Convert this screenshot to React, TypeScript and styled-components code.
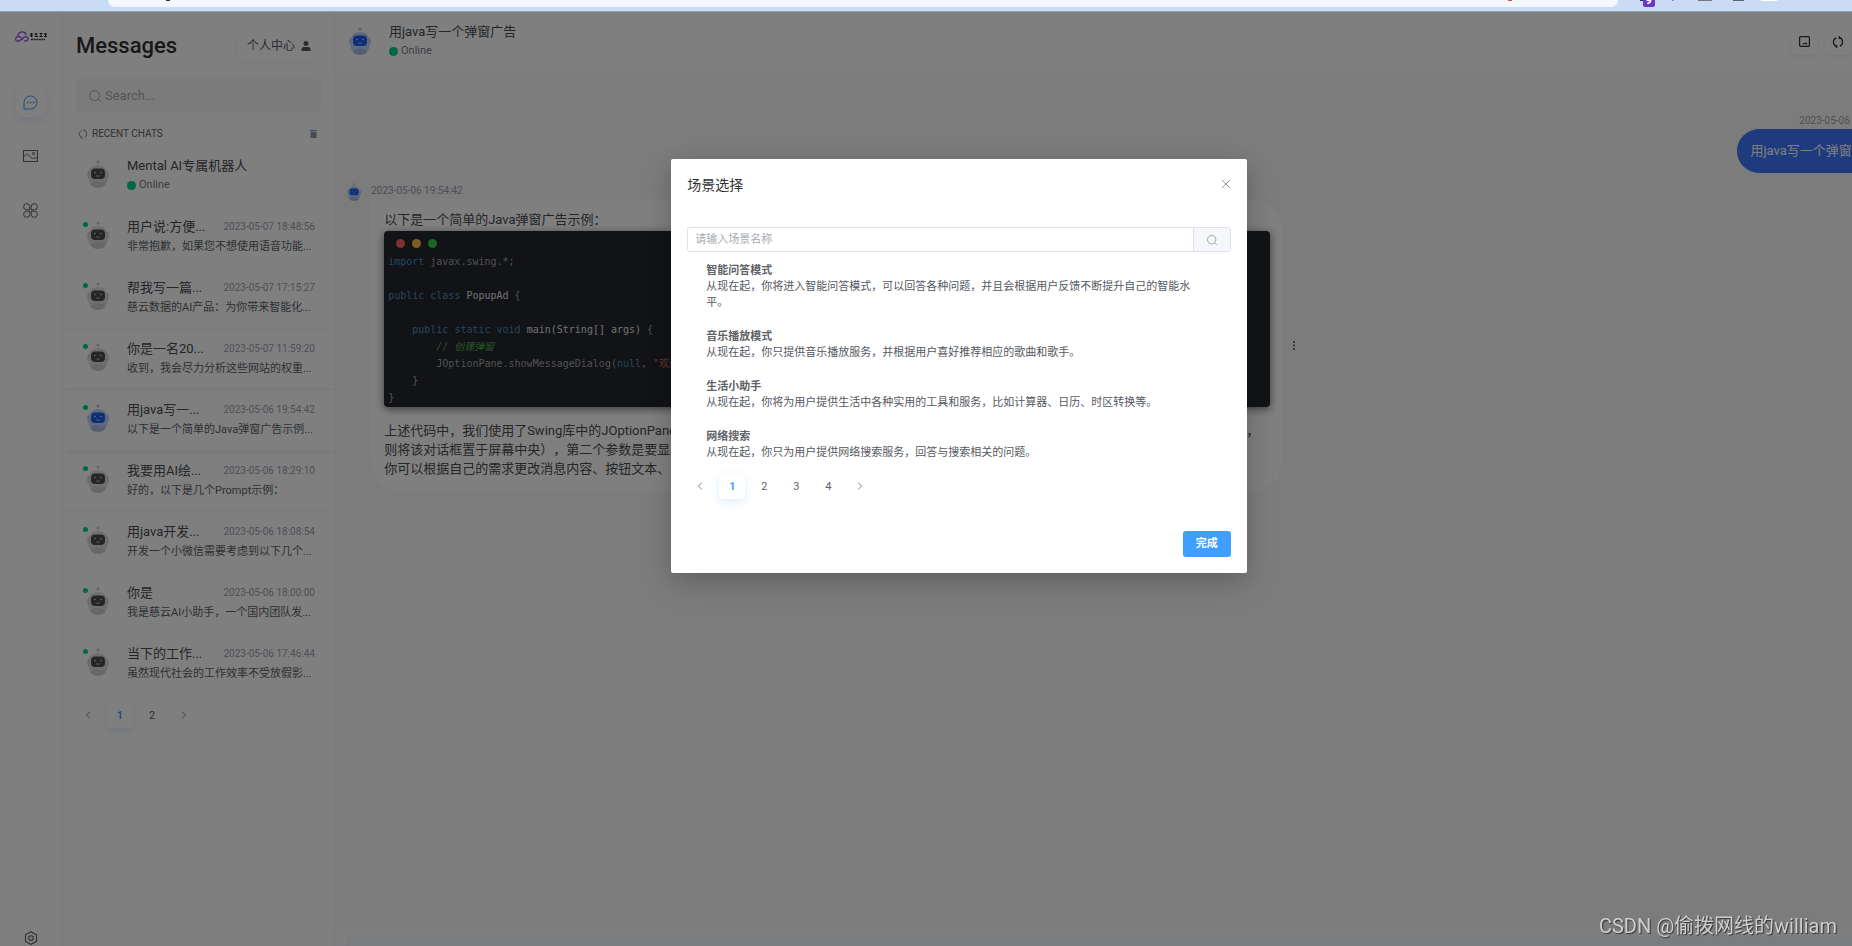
import React from "react";
import styled, { createGlobalStyle, css } from "styled-components";

const GlobalStyle = createGlobalStyle`
  * { box-sizing: border-box; }
  body {
    margin: 0;
    overflow: hidden;
    background: #fff;
    color: #303133;
    font-family: Roboto, "Noto Sans CJK SC", sans-serif;
    font-size: 13px;
    text-spacing-trim: space-all;
  }
  button { font: inherit; color: inherit; background: none; border: 0; padding: 0; cursor: pointer; }
  input { font: inherit; color: inherit; border: 0; outline: 0; background: none; padding: 0; min-width: 0; }
  h1, h2, h3, p, ul, pre { margin: 0; padding: 0; font-size: inherit; font-weight: inherit; }
  ul { list-style: none; }
  svg { display: block; flex: none; }
`;

const Screen = styled.div`
  height: 100vh;
  display: flex;
  flex-direction: column;
  overflow: hidden;
`;

const BrowserBar = styled.div`
  height: 12px;
  flex: none;
  display: flex;
  justify-content: space-between;
  background: #cadbf5;
  border-bottom: 1px solid #93a1b8;
`;

const AddressBar = styled.div`
  flex: 1;
  height: 7px;
  margin-left: 108px;
  padding: 0 106px 0 58px;
  display: flex;
  justify-content: space-between;
  background: #f4f8fe;
  border-radius: 0 0 14px 14px;
`;

const Speck = styled.span<{ $color: string }>`
  width: 4px;
  height: 1px;
  background: ${(p) => p.$color};
`;

/* The workspace is wider than the window; its right edge scrolls out of view. */
const Workspace = styled.div`
  position: relative;
  flex: 1;
  min-height: 0;
  width: calc(100% + 66px);
  display: flex;
`;

const Rail = styled.nav`
  width: 63px;
  flex: none;
  display: flex;
  flex-direction: column;
  align-items: center;
  padding: 19px 1px 0 0;
  border-right: 1px solid #f4f4f6;
  color: #606266;
`;

const RailButton = styled.button<{ $active?: boolean }>`
  width: 30px;
  height: 30px;
  margin-bottom: 24px;
  display: flex;
  align-items: center;
  justify-content: center;
  border-radius: 8px;
  ${(p) =>
    p.$active &&
    css`
      color: #409eff;
      box-shadow: 0 3px 8px rgba(64, 110, 255, 0.14);
    `}
`;

const RailSpacer = styled.div<{ $size?: number }>`
  ${(p) => (p.$size ? `height: ${p.$size}px;` : "flex: 1;")}
`;

const RailFooter = styled.div`
  height: 15px;
  flex: none;
`;

const Sidebar = styled.aside`
  width: 272px;
  flex: none;
  border-right: 1px solid #f4f4f6;
`;

const SidebarTop = styled.div`
  padding: 19px 13px 0;
`;

const TitleRow = styled.div`
  display: flex;
  justify-content: space-between;
  align-items: center;
  height: 29px;
`;

const PageTitle = styled.h1`
  font-size: 22px;
  line-height: 28px;
  font-weight: 500;
`;

const ProfileButton = styled.button`
  width: 84px;
  height: 29px;
  display: flex;
  align-items: center;
  justify-content: center;
  gap: 6px;
  font-size: 12px;
  line-height: 16px;
  color: #55585e;
  border-radius: 8px;
  box-shadow: 0 2px 8px rgba(64, 110, 255, 0.08);
`;

const SearchBox = styled.label`
  height: 33px;
  margin-top: 19px;
  padding: 0 13px;
  display: flex;
  align-items: center;
  gap: 4px;
  background: #f6f6f7;
  border-radius: 4px;
  color: #a8abb2;
  font-size: 13px;
  input { flex: 1; }
  input::placeholder { color: #a8abb2; opacity: 1; }
`;

const SectionRow = styled.div`
  height: 16px;
  margin-top: 14px;
  padding: 0 4px 0 2px;
  display: flex;
  align-items: center;
  gap: 4px;
  color: #8a98b0;
  h2 {
    flex: 1;
    color: #606266;
    font-size: 10px;
    line-height: 16px;
  }
`;

const ChatList = styled.ul`
  margin-top: 4px;
`;

const ChatItem = styled.li<{ $active?: boolean }>`
  height: 61px;
  border-bottom: 1px solid #f6f6f8;
  ${(p) =>
    p.$active &&
    css`
      box-shadow: 0 4px 6px -4px rgba(0, 0, 0, 0.14), 0 -3px 5px -4px rgba(0, 0, 0, 0.14);
    `}
`;

const ChatButton = styled.button`
  width: 100%;
  height: 100%;
  padding: 0 19px 0 20px;
  display: flex;
  text-align: left;
`;

const AvatarSlot = styled.span`
  position: relative;
  width: 44px;
  flex: none;
  padding: 14px 0 0 4px;
`;

const Presence = styled.span`
  position: absolute;
  left: 0;
  top: 15px;
  width: 5px;
  height: 5px;
  border-radius: 50%;
  background: #00cf86;
`;

const ChatText = styled.span`
  flex: 1;
  min-width: 0;
  padding-top: 10px;
  display: flex;
  flex-direction: column;
`;

const ChatHead = styled.span`
  display: flex;
  justify-content: space-between;
  align-items: center;
  height: 20px;
`;

const ChatTitle = styled.span`
  color: #4a4c50;
  font-size: 13px;
  line-height: 20px;
  white-space: nowrap;
`;

const Stamp = styled.span`
  color: #9b9fae;
  font-size: 10px;
  line-height: 16px;
  white-space: nowrap;
`;

const ChatDesc = styled.span`
  color: #5c5f66;
  font-size: 11px;
  line-height: 20px;
  white-space: nowrap;
  overflow: hidden;
`;

const Online = styled.span`
  display: flex;
  align-items: center;
  gap: 3px;
  color: #7a7d84;
  font-size: 11px;
  line-height: 18px;
  &::before {
    content: "";
    width: 9px;
    height: 9px;
    border-radius: 50%;
    background: #00cf86;
  }
`;

const PagerNav = styled.nav<{ $sidebar?: boolean }>`
  display: flex;
  gap: 6px;
  ${(p) => p.$sidebar && "margin: 7px 0 0 12px;"}
`;

const PageButton = styled.button<{ $active?: boolean }>`
  width: 26px;
  height: 26px;
  display: flex;
  align-items: center;
  justify-content: center;
  font-size: 11px;
  color: #606266;
  border-radius: 4px;
  ${(p) =>
    p.$active &&
    css`
      color: #409eff;
      font-weight: 700;
      box-shadow: 0 3px 8px rgba(64, 158, 255, 0.18);
    `}
`;

const Main = styled.main`
  flex: 1;
  min-width: 0;
  display: flex;
  flex-direction: column;
`;

const MainHeader = styled.header`
  height: 61px;
  flex: none;
  padding: 15px 33px 0 14px;
  display: flex;
`;

const MainHeading = styled.div`
  flex: 1;
  margin: -5px 0 0 18px;
`;

const HeaderTools = styled.div`
  display: flex;
  gap: 8px;
  margin-top: 4px;
`;

const ToolButton = styled.button`
  width: 26px;
  height: 24px;
  padding-bottom: 3px;
  display: flex;
  align-items: center;
  justify-content: center;
  border-radius: 4px;
  box-shadow: 0 1px 4px rgba(0, 0, 0, 0.07);
`;

const Thread = styled.section`
  flex: 1;
  min-height: 0;
  padding: 40px 5px 0 12px;
  background: #f8f8f9;
`;

const Sent = styled.div`
  display: flex;
  justify-content: flex-end;
  align-items: flex-start;
  gap: 8px;
`;

const Received = styled.div`
  margin-top: 10px;
  display: flex;
  align-items: flex-start;
  gap: 10px;
`;

const MessageColumn = styled.div<{ $right?: boolean }>`
  display: flex;
  flex-direction: column;
  align-items: ${(p) => (p.$right ? "flex-end" : "flex-start")};
  min-width: 0;
`;

const SentBubble = styled.p`
  height: 44px;
  padding: 12px 13px;
  border-radius: 22px;
  background: #3c76fa;
  color: #fff;
  line-height: 20px;
  white-space: nowrap;
`;

const BubbleRow = styled.div`
  display: flex;
  align-items: center;
  gap: 11px;
  color: #6f7588;
`;

const Bubble = styled.article`
  width: 911px;
  max-width: 100%;
  padding: 11px 12px 14px 13px;
  background: #fff;
  color: #4a4c50;
  border-radius: 0 32px 32px 32px;
  line-height: 19px;
  font-size: 13px;
  white-space: nowrap;
`;

const CodeBlock = styled.pre`
  margin: 2px 0 14px;
  padding: 7px 4px 0;
  height: 176px;
  border-radius: 4px;
  background: #22262c;
  color: #a4a4a4;
  box-shadow: 0 2px 8px rgba(0, 0, 0, 0.55);
  font-family: "DejaVu Sans Mono", "Noto Sans CJK SC", monospace;
  font-size: 10px;
  line-height: 17px;
  overflow: hidden;
  code { font: inherit; display: block; height: 153px; }
  b { font-weight: 400; color: #488bc0; }
  strong { font-weight: 400; color: #e0e0e0; }
  em { color: #57a64a; }
  q { quotes: none; color: #d6705c; }
`;

const WindowDots = styled.span`
  display: flex;
  gap: 7px;
  height: 15px;
  padding: 1px 0 0 8px;
`;

const Dot = styled.i<{ $color: string }>`
  width: 9px;
  height: 9px;
  border-radius: 50%;
  background: ${(p) => p.$color};
`;

const Composer = styled.footer`
  height: 17px;
  flex: none;
  padding: 7px 10px 0;
  background: #fff;
  input {
    display: block;
    width: 100%;
    height: 10px;
    background: #f7f9fe;
    border-radius: 4px 4px 0 0;
  }
`;

const Overlay = styled.div`
  position: absolute;
  inset: 0;
  display: flex;
  justify-content: center;
  align-items: flex-start;
  padding-top: 147px;
  background: rgba(0, 0, 0, 0.5);
`;

const Dialog = styled.div`
  width: 30%;
  padding: 16px;
  background: #fff;
  border-radius: 2px;
  box-shadow: 0 12px 32px rgba(0, 0, 0, 0.12), 0 4px 20px rgba(0, 0, 0, 0.12);
`;

const DialogHead = styled.div`
  display: flex;
  justify-content: space-between;
  align-items: flex-start;
  height: 52px;
  color: #909399;
  h2 {
    color: #303133;
    font-size: 14px;
    line-height: 20px;
  }
`;

const CloseButton = styled.button`
  padding: 4px 0;
`;

const SceneSearch = styled.div`
  display: flex;
  height: 25px;
  border: 1px solid #dfe2e9;
  border-radius: 3px;
  overflow: hidden;
  input {
    flex: 1;
    padding: 0 7px;
    font-size: 11px;
  }
  input::placeholder { color: #a8abb2; opacity: 1; }
  button {
    width: 37px;
    display: flex;
    align-items: center;
    justify-content: center;
    background: #f5f7fa;
    border-left: 1px solid #dfe2e9;
    color: #909399;
  }
`;

const SceneList = styled.ul`
  margin-top: 10px;
  padding: 0 19px;
`;

const Scene = styled.li`
  font-size: 11px;
  line-height: 16px;
  color: #55585e;
  h3 {
    font-weight: 700;
    line-height: 17px;
    color: #606266;
  }
  & + & { margin-top: 17px; }
`;

const DialogBody = styled.div`
  display: flex;
  flex-direction: column;
  gap: 12px;
`;

const DialogFoot = styled.div`
  display: flex;
  justify-content: flex-end;
  margin-top: 32px;
`;

const PrimaryButton = styled.button`
  width: 48px;
  height: 26px;
  border-radius: 3px;
  background: #409eff;
  color: #fff;
  font-size: 11px;
  font-weight: 700;
  line-height: 16px;
`;

const Watermark = styled.div`
  position: fixed;
  right: 15px;
  bottom: 6px;
  color: #cfcfcf;
  font-size: 20px;
  line-height: 28px;
  text-shadow: 1px 1px 1px #333;
`;

function Robot({ blue, size = 28 }: { blue?: boolean; size?: number }) {
  const body = blue ? "#c3d3f8" : "#dedede";
  const ear = blue ? "#a9bff2" : "#c8c8c8";
  const belly = blue ? "#a9bdec" : "#cecece";
  return (
    <svg width={(size * 22) / 28} height={size} viewBox="0 0 22 28">
      <circle cx="11" cy="2" r="1.6" fill={ear} />
      <rect x="0.5" y="11" width="3" height="7" rx="1.5" fill={ear} />
      <rect x="18.5" y="11" width="3" height="7" rx="1.5" fill={ear} />
      <path d="M1.5 15C1.5 8.5 5.5 5 11 5s9.500 3.500 9.500 10v3c0 6-4 10-9.500 10S1.500 24 1.500 18z" fill={body} />
      <ellipse cx="11" cy="24.500" rx="7" ry="3.300" fill={belly} />
      <rect x="4" y="8.500" width="14" height="10.500" rx="4" fill={blue ? "#1f5cf0" : "#4c4c4c"} />
      <circle cx="8" cy="12.500" r="0.700" fill="#fff" />
      <circle cx="14" cy="12.500" r="0.700" fill="#fff" />
      <path d="M9.500 15.800q1.500 1.200 3 0" stroke="#fff" strokeWidth="0.700" fill="none" />
    </svg>
  );
}

const Magnifier = ({ size = 12 }: { size?: number }) => (
  <svg width={size} height={size} viewBox="0 0 12 12" fill="none" stroke="currentColor">
    <circle cx="5.600" cy="5.600" r="5" />
    <path d="M9.200 9.200l2.500 2.500" />
  </svg>
);

const Refresh = ({ size = 10 }: { size?: number }) => (
  <svg width={size} height={size} viewBox="0 0 12 12" fill="none" stroke="currentColor" strokeWidth="1.200">
    <path d="M4.200 10.200A4.500 4.500 0 0 1 4.200 1.900M7.800 1.800A4.500 4.500 0 0 1 7.800 10.100" />
    <path d="M7.300 0v2.400h2.500M4.700 12V9.600H2.200" />
  </svg>
);

const Chevron = ({ right }: { right?: boolean }) => (
  <svg width="6" height="8" viewBox="0 0 6 8" fill="none" stroke="#8b8e94">
    <path d={right ? "M1 0.700L4.800 4 1 7.300" : "M5 0.700L1.200 4 5 7.300"} />
  </svg>
);

function Logo() {
  return (
    <svg width="32" height="12" viewBox="0 0 32 12" fill="none">
      <path
        d="M8 8.500L5 6C3 4.500.7 6 .7 8S3 11 5 9.500l4-3.300c1.800-1.300 4 0 4 1.800s-2.400 2.800-4 1.500M3 5C3 2.500 5 .8 7.300.8c2 0 3.500 1.200 4 3"
        stroke="#9a4fd8"
        strokeWidth="1.300"
      />
      <path d="M15 3h3M16.500 2v4M15 5h3M19.500 3h3M20 5.500h3M21 2v4M24.500 2.500h3M24.500 5.500h3M26 2v4M29 3h3M29 5.500h3M30.500 2v4" stroke="#222" />
      <path d="M16 8.500h14" stroke="#444" strokeWidth="1.500" strokeDasharray="2 .6" />
    </svg>
  );
}

function ToolbarIcons() {
  return (
    <svg width="234" height="7" viewBox="0 0 234 7">
      <path d="M22 0h3v1h-3z" fill="#33307a" />
      <rect x="25" y="-6" width="12" height="13" rx="2" fill="#6a37c2" />
      <text x="27.500" y="4" fontSize="11" fontWeight="700" fill="#fff">9</text>
      <path d="M54 0h2v1h-2z" fill="#8795b0" />
      <path d="M80 0h14v1h-14z" fill="#77797d" />
      <path d="M115 0h11v1h-11z" fill="#5d6470" />
      <path d="M143 0h16v1h-16z" fill="#fff" />
    </svg>
  );
}

function Pager({ pages, sidebar }: { pages: number; sidebar?: boolean }) {
  return (
    <PagerNav $sidebar={sidebar} aria-label="分页">
      <PageButton aria-label="上一页"><Chevron /></PageButton>
      {Array.from({ length: pages }, (_, i) => (
        <PageButton key={i} $active={i === 0}>{i + 1}</PageButton>
      ))}
      <PageButton aria-label="下一页"><Chevron right /></PageButton>
    </PagerNav>
  );
}

const chats = [
  { title: "用户说:方便...", time: "2023-05-07 18:48:56", desc: "非常抱歉，如果您不想使用语音功能..." },
  { title: "帮我写一篇...", time: "2023-05-07 17:15:27", desc: "慈云数据的AI产品：为你带来智能化..." },
  { title: "你是一名20...", time: "2023-05-07 11:59:20", desc: "收到，我会尽力分析这些网站的权重..." },
  { title: "用java写一...", time: "2023-05-06 19:54:42", desc: "以下是一个简单的Java弹窗广告示例...", active: true },
  { title: "我要用AI绘...", time: "2023-05-06 18:29:10", desc: "好的，以下是几个Prompt示例：" },
  { title: "用java开发...", time: "2023-05-06 18:08:54", desc: "开发一个小微信需要考虑到以下几个..." },
  { title: "你是", time: "2023-05-06 18:00:00", desc: "我是慈云AI小助手，一个国内团队发..." },
  { title: "当下的工作...", time: "2023-05-06 17:46:44", desc: "虽然现代社会的工作效率不受放假影..." },
];

const scenes = [
  { name: "智能问答模式", text: "从现在起，你将进入智能问答模式，可以回答各种问题，并且会根据用户反馈不断提升自己的智能水平。" },
  { name: "音乐播放模式", text: "从现在起，你只提供音乐播放服务，并根据用户喜好推荐相应的歌曲和歌手。" },
  { name: "生活小助手", text: "从现在起，你将为用户提供生活中各种实用的工具和服务，比如计算器、日历、时区转换等。" },
  { name: "网络搜索", text: "从现在起，你只为用户提供网络搜索服务，回答与搜索相关的问题。" },
];

export default function App() {
  return (
    <Screen>
      <GlobalStyle />
      <BrowserBar>
        <AddressBar>
          <Speck $color="#30363f" />
          <Speck $color="#d8504a" />
        </AddressBar>
        <ToolbarIcons />
      </BrowserBar>
      <Workspace>
        <Rail aria-label="主导航">
          <Logo />
          <RailSpacer $size={44} />
          <RailButton $active aria-label="聊天">
            <svg width="15" height="15" viewBox="0 0 15 15" fill="none" stroke="currentColor">
              <path d="M1 14V7.500A6.500 6.500 0 1 1 7.500 14z" />
              <path d="M4 7.500h1.500M7 7.500h1.500M10 7.500h1.500" strokeWidth="1.300" />
            </svg>
          </RailButton>
          <RailButton aria-label="图片">
            <svg width="15" height="12" viewBox="0 0 15 12" fill="none" stroke="currentColor">
              <rect x="0.500" y="0.500" width="14" height="11" />
              <path d="M.5 7.500C3 3.500 4.500 3.500 6.500 6s4 3.500 8 .8" />
              <circle cx="10.500" cy="3.500" r="1.200" />
            </svg>
          </RailButton>
          <RailButton aria-label="应用">
            <svg width="15" height="15" viewBox="0 0 15 15" fill="none" stroke="currentColor">
              <path d="M6.800 6.800H3.700A3.100 3.100 0 1 1 6.800 3.700zM8.200 6.800V3.700a3.100 3.100 0 1 1 3.100 3.100zM6.800 8.200v3.100A3.100 3.100 0 1 1 3.700 8.200zM8.200 8.200h3.100a3.100 3.100 0 1 1-3.100 3.100z" />
            </svg>
          </RailButton>
          <RailSpacer />
          <RailFooter>
            <button aria-label="设置">
              <svg width="14" height="14" viewBox="0 0 14 14" fill="none" stroke="currentColor" strokeWidth="1.100">
                <path d="M7 .7l2 1.200 3.500 1.600v7L9 12.300l-2 1-2-1-3.500-1.800v-7L5 1.900z" />
                <circle cx="7" cy="7" r="2.300" />
              </svg>
            </button>
          </RailFooter>
        </Rail>

        <Sidebar>
          <SidebarTop>
            <TitleRow>
              <PageTitle>Messages</PageTitle>
              <ProfileButton>
                个人中心
                <svg width="10" height="10" viewBox="0 0 10 10" fill="currentColor">
                  <circle cx="5" cy="2.500" r="2.500" />
                  <path d="M0.500 10V8.200Q.5 6 3 6h4q2.500 0 2.500 2.200V10z" />
                </svg>
              </ProfileButton>
            </TitleRow>
            <SearchBox>
              <Magnifier size={12} />
              <input type="text" placeholder="Search..." aria-label="Search" />
            </SearchBox>
            <SectionRow>
              <Refresh size={10} />
              <h2>RECENT CHATS</h2>
              <button aria-label="清空">
                <svg width="7" height="8" viewBox="0 0 7 8" fill="currentColor">
                  <path d="M0 0h7v1H0zM0.500 1.800h6V8h-6z" />
                </svg>
              </button>
            </SectionRow>
          </SidebarTop>
          <ChatList>
            <ChatItem>
              <ChatButton>
                <AvatarSlot><Robot /></AvatarSlot>
                <ChatText>
                  <ChatTitle>Mental AI专属机器人</ChatTitle>
                  <Online>Online</Online>
                </ChatText>
              </ChatButton>
            </ChatItem>
            {chats.map((c) => (
              <ChatItem key={c.time} $active={c.active}>
                <ChatButton>
                  <AvatarSlot>
                    <Presence />
                    <Robot blue={c.active} />
                  </AvatarSlot>
                  <ChatText>
                    <ChatHead>
                      <ChatTitle>{c.title}</ChatTitle>
                      <Stamp>{c.time}</Stamp>
                    </ChatHead>
                    <ChatDesc>{c.desc}</ChatDesc>
                  </ChatText>
                </ChatButton>
              </ChatItem>
            ))}
          </ChatList>
          <Pager pages={2} sidebar />
        </Sidebar>

        <Main>
          <MainHeader>
            <Robot blue />
            <MainHeading>
              <ChatTitle as="h2">用java写一个弹窗广告</ChatTitle>
              <Online>Online</Online>
            </MainHeading>
            <HeaderTools>
              <ToolButton aria-label="保存图片">
                <svg width="11" height="11" viewBox="0 0 11 11" fill="none" stroke="currentColor" strokeWidth="1.200">
                  <rect x="0.600" y="0.600" width="9.800" height="9.800" rx="1" />
                  <path d="M3 8.300l1.700-1.600 1.200.8 1.300-1.200L8.500 8.300z" fill="currentColor" stroke="none" />
                </svg>
              </ToolButton>
              <ToolButton aria-label="刷新"><Refresh size={12} /></ToolButton>
              <ToolButton aria-label="清空"><Refresh size={12} /></ToolButton>
            </HeaderTools>
          </MainHeader>

          <Thread>
            <Sent>
              <MessageColumn $right>
                <Stamp>2023-05-06 19:54:38</Stamp>
                <SentBubble>用java写一个弹窗广告</SentBubble>
              </MessageColumn>
              <Robot size={18} />
            </Sent>
            <Received>
              <Robot blue size={18} />
              <MessageColumn>
                <Stamp>2023-05-06 19:54:42</Stamp>
                <BubbleRow>
                  <Bubble>
                    <p>以下是一个简单的Java弹窗广告示例：</p>
                    <CodeBlock>
                      <WindowDots>
                        <Dot $color="#fc625d" />
                        <Dot $color="#fdbc40" />
                        <Dot $color="#35cd4b" />
                      </WindowDots>
                      <code>
                        <b>import</b>{" javax.swing.*;\n\n"}
                        <b>public</b> <b>class</b> <strong>PopupAd</strong>{" {\n\n    "}
                        <b>public</b> <b>static</b> <b>void</b> <strong>main(String[] args)</strong>{" {\n        "}
                        <em>// 创建弹窗</em>{"\n        JOptionPane.showMessageDialog("}
                        <b>null</b>, <q>"欢迎光临本店！"</q>{");\n    }\n}"}
                      </code>
                    </CodeBlock>
                    <p>上述代码中，我们使用了Swing库中的JOptionPane类来创建一个简单的弹窗广告对话框，showMessageDialog方法的第一个参数是父组件（如果为null，</p>
                    <p>则将该对话框置于屏幕中央），第二个参数是要显示的消息内容。</p>
                    <p>你可以根据自己的需求更改消息内容、按钮文本、图标等。</p>
                  </Bubble>
                  <svg width="3" height="9" viewBox="0 0 3 9" fill="currentColor">
                    <path d="M0 0h2v2H0zM0 3.500h2v2H0zM0 7h2v2H0z" />
                  </svg>
                </BubbleRow>
              </MessageColumn>
            </Received>
          </Thread>
          <Composer>
            <input type="text" aria-label="输入消息" />
          </Composer>
        </Main>

        <Overlay>
          <Dialog role="dialog" aria-modal="true" aria-label="场景选择">
            <DialogHead>
              <h2>场景选择</h2>
              <CloseButton aria-label="关闭">
                <svg width="10" height="10" viewBox="0 0 10 10" stroke="currentColor">
                  <path d="M1 1l8 8M9 1L1 9" />
                </svg>
              </CloseButton>
            </DialogHead>
            <SceneSearch>
              <input type="text" placeholder="请输入场景名称" aria-label="场景名称" />
              <button aria-label="搜索"><Magnifier size={10} /></button>
            </SceneSearch>
            <DialogBody>
              <SceneList>
                {scenes.map((s) => (
                  <Scene key={s.name}>
                    <h3>{s.name}</h3>
                    <p>{s.text}</p>
                  </Scene>
                ))}
              </SceneList>
              <Pager pages={4} />
            </DialogBody>
            <DialogFoot>
              <PrimaryButton>完成</PrimaryButton>
            </DialogFoot>
          </Dialog>
        </Overlay>
      </Workspace>
      <Watermark>CSDN @偷拨网线的william</Watermark>
    </Screen>
  );
}
